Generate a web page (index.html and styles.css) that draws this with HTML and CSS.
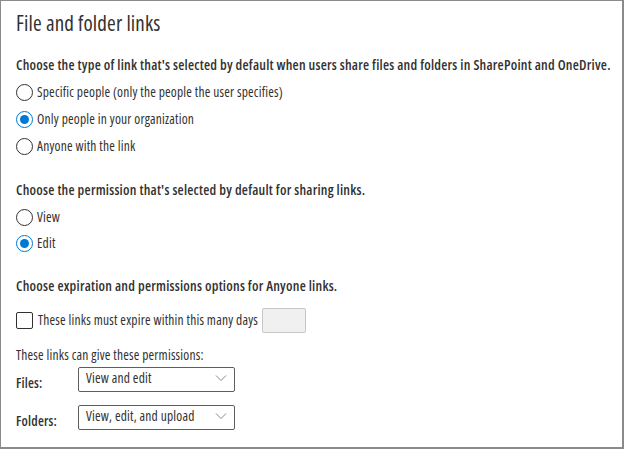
FILE: index.html
```html
<!DOCTYPE html>
<html>
<head>
<meta charset="utf-8">
<link rel="stylesheet" href="styles.css">
</head>
<body>
<div class="frame">
  <h1 class="title">File and folder links</h1>

  <p class="q q1">Choose the type of link that's selected by default when users share files and folders in SharePoint and OneDrive.</p>
  <div class="options">
    <div class="opt"><span class="radio"></span><span>Specific people (only the people the user specifies)</span></div>
    <div class="opt"><span class="radio on"></span><span>Only people in your organization</span></div>
    <div class="opt"><span class="radio"></span><span>Anyone with the link</span></div>
  </div>

  <p class="q q2">Choose the permission that's selected by default for sharing links.</p>
  <div class="options opts2">
    <div class="opt"><span class="radio"></span><span>View</span></div>
    <div class="opt"><span class="radio on"></span><span>Edit</span></div>
  </div>

  <p class="q q3">Choose expiration and permissions options for Anyone links.</p>
  <div class="expire">
    <span class="check"></span><span>These links must expire within this many days</span><span class="days"></span>
  </div>
  <p class="perm">These links can give these permissions:</p>
  <div class="field files">
    <span class="flabel">Files:</span>
    <span class="select"><span>View and edit</span><svg width="12" height="8" viewBox="0 0 12 8"><path d="M1 1.5 L6 6.5 L11 1.5" fill="none" stroke="#8a8886" stroke-width="1"/></svg></span>
  </div>
  <div class="field folders">
    <span class="flabel">Folders:</span>
    <span class="select"><span>View, edit, and upload</span><svg width="12" height="8" viewBox="0 0 12 8"><path d="M1 1.5 L6 6.5 L11 1.5" fill="none" stroke="#8a8886" stroke-width="1"/></svg></span>
  </div>
</div>
</body>
</html>
```
FILE: styles.css
```css
* { box-sizing: border-box; }
html, body { margin: 0; padding: 0; background: #fff; }
body { font-family: "Open Sans", "Noto Sans", sans-serif; font-stretch: 87%; color: #323130; }
.frame {
  width: 624px; height: 449px;
  border: 1px solid #8a8a8a;
  border-right-width: 2px; border-bottom-width: 2px;
  padding: 8px 0 0 15px;
  white-space: nowrap;
}
.title { margin: 0; font-size: 21px; font-weight: 400; line-height: 28px; letter-spacing: 0.15px; }
.q { margin: 0; font-size: 14px; font-weight: 600; line-height: 18px; letter-spacing: 0.23px; }
.q1 { margin-top: 19px; }
.q2 { margin-top: 25px; }
.q3 { margin-top: 24px; }
.options { display: flex; flex-direction: column; gap: 7px; margin-top: 8px; }
.opts2 { gap: 6px; }
.opt { display: flex; align-items: center; gap: 4px; height: 20px; }
.opt, .expire, .perm, .field { font-size: 13.5px; letter-spacing: 0.2px; }
.radio { width: 17px; height: 17px; border: 1px solid #323130; border-radius: 50%; position: relative; flex: none; }
.radio.on { border-color: #0078d4; }
.radio.on::after { content: ""; position: absolute; left: 3px; top: 3px; width: 9px; height: 9px; border-radius: 50%; background: #0078d4; }
.expire { display: flex; align-items: center; height: 26px; margin-top: 12px; }
.check { width: 17px; height: 17px; border: 1px solid #323130; border-radius: 2px; margin-right: 5px; flex: none; }
.days { width: 44px; height: 25px; background: #f0f0f0; border: 1px solid #c8c6c4; border-radius: 2px; margin-left: 4px; }
.perm { margin: 14px 0 0; line-height: 16px; }
.field { display: flex; align-items: center; }
.files { margin-top: 3px; }
.folders { margin-top: 12px; }
.flabel { width: 62px; font-weight: 600; padding-top: 8px; }
.select { width: 157px; height: 25px; border: 1px solid #605e5c; border-radius: 2px; display: flex; align-items: center; justify-content: space-between; padding: 0 7px 2px 7px; }
.select svg { flex: none; }
```
